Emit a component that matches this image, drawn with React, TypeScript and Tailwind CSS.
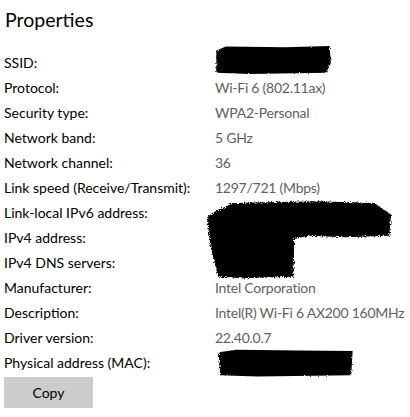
import React from 'react';

type Row = { label: string; value?: string; redact?: 'ssid' | 'ip' | 'mac' };

const ROWS: Row[] = [
  { label: 'SSID:', redact: 'ssid' },
  { label: 'Protocol:', value: 'Wi-Fi 6 (802.11ax)' },
  { label: 'Security type:', value: 'WPA2-Personal' },
  { label: 'Network band:', value: '5 GHz' },
  { label: 'Network channel:', value: '36' },
  { label: 'Link speed (Receive/Transmit):', value: '1297/721 (Mbps)' },
  { label: 'Link-local IPv6 address:', redact: 'ip' },
  { label: 'IPv4 address:' },
  { label: 'IPv4 DNS servers:' },
  { label: 'Manufacturer:', value: 'Intel Corporation' },
  { label: 'Description:', value: 'Intel(R) Wi-Fi 6 AX200 160MHz' },
  { label: 'Driver version:', value: '22.40.0.7' },
  { label: 'Physical address (MAC):', redact: 'mac' },
];

// scribbled-out redaction
function Scribble({ d, className }: { d: string; className: string }) {
  return (
    <svg className={className} viewBox="0 0 200 100" preserveAspectRatio="none">
      <defs>
        <filter id="rough" x="-10%" y="-10%" width="120%" height="120%">
          <feTurbulence type="fractalNoise" baseFrequency="0.6" numOctaves="2" result="n" />
          <feDisplacementMap in="SourceGraphic" in2="n" scale="6" />
          <feGaussianBlur stdDeviation="0.6" />
        </filter>
      </defs>
      <path d={d} fill="#000" filter="url(#rough)" />
    </svg>
  );
}

function Redaction({ kind }: { kind: Row['redact'] }) {
  if (kind === 'ssid')
    return (
      <Scribble
        className="absolute -left-[1px] -top-[6px] w-[118px] h-[32px]"
        d="M4 20 L20 8 L120 10 L196 6 L198 60 L190 90 L60 94 L4 90 Z"
      />
    );
  if (kind === 'ip')
    return (
      <Scribble
        className="absolute -left-[10px] -top-[2px] w-[188px] h-[82px]"
        d="M8 18 L30 6 L120 4 L180 6 L198 20 L196 46 L150 48 L110 46 L95 50 L94 96 L40 98 L14 96 L6 60 L2 24 Z"
      />
    );
  return (
    <Scribble
      className="absolute left-[1px] -top-[2px] w-[138px] h-[31px]"
      d="M4 14 L30 6 L120 8 L198 10 L196 88 L60 92 L6 88 Z"
    />
  );
}

export default function App() {
  return (
    <div className="w-[410px] h-[417px] bg-white overflow-hidden font-['Lato',sans-serif]">
      <h1 className="pl-[5px] pt-[6px] text-[19.5px] leading-[28px] text-black">Properties</h1>

      <div className="mt-[16px] grid grid-cols-[215px_1fr] text-[14px] leading-[25px]">
        {ROWS.map((r) => (
          <React.Fragment key={r.label}>
            <div className="pl-[4px] text-black whitespace-nowrap">{r.label}</div>
            <div className="relative text-[#5f5f5f] tracking-[-0.25px] whitespace-nowrap">
              {r.value}
              {r.redact && <Redaction kind={r.redact} />}
            </div>
          </React.Fragment>
        ))}
      </div>

      <button className="ml-[4px] mt-[2px] w-[89px] h-[31px] bg-[#cccccc] text-[14px] text-black">
        Copy
      </button>
    </div>
  );
}
